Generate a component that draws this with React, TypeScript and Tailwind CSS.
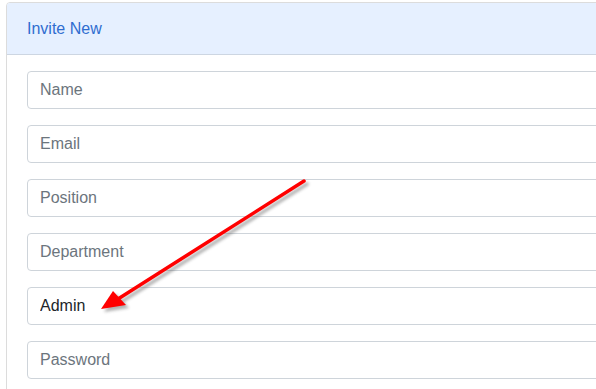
import React from "react";

const fields = [
  { ph: "Name" },
  { ph: "Email" },
  { ph: "Position" },
  { ph: "Department" },
  { ph: "", value: "Admin" },
  { ph: "Password" },
];

export default function App() {
  return (
    <div
      className="relative w-[596px] h-[389px] overflow-hidden bg-white"
      style={{ fontFamily: '"Liberation Sans", Arial, sans-serif' }}
    >
      <div className="ml-[6px] mt-[2px] w-[640px] h-[400px] border border-[#dcdcdc] rounded-[4px] overflow-hidden">
        <div className="h-[52px] bg-[#e6f0ff] border-b border-[#cdd6e2] flex items-center pl-[20px]">
          <span className="text-[16px] text-[#2f6dd0]">Invite New</span>
        </div>
        <div className="pt-[16px] pl-[20px] flex flex-col gap-[16px]">
          {fields.map((f, i) => (
            <input
              key={i}
              readOnly
              placeholder={f.ph}
              defaultValue={f.value}
              className="w-[600px] h-[38px] border border-[#ced4da] rounded-[4px] px-[12px] text-[16px] text-[#212529] placeholder:text-[#6c757d] outline-none bg-white"
            />
          ))}
        </div>
      </div>
      <svg
        className="absolute left-0 top-0 pointer-events-none"
        width="596"
        height="389"
        viewBox="0 0 596 389"
      >
        <defs>
          <filter id="sh" x="-20%" y="-20%" width="140%" height="140%">
            <feGaussianBlur stdDeviation="1.5" />
          </filter>
        </defs>
        <g transform="translate(3,3)" filter="url(#sh)" opacity="0.45">
          <line x1="304" y1="181" x2="118" y2="299" stroke="#555" strokeWidth="3.5" strokeLinecap="round" />
          <polygon points="101,309 113,291 126,305" fill="#555" />
        </g>
        <line x1="304" y1="181" x2="118" y2="299" stroke="#ff0000" strokeWidth="3.5" strokeLinecap="round" />
        <polygon points="101,309 113,291 126,305" fill="#ff0000" />
      </svg>
    </div>
  );
}
